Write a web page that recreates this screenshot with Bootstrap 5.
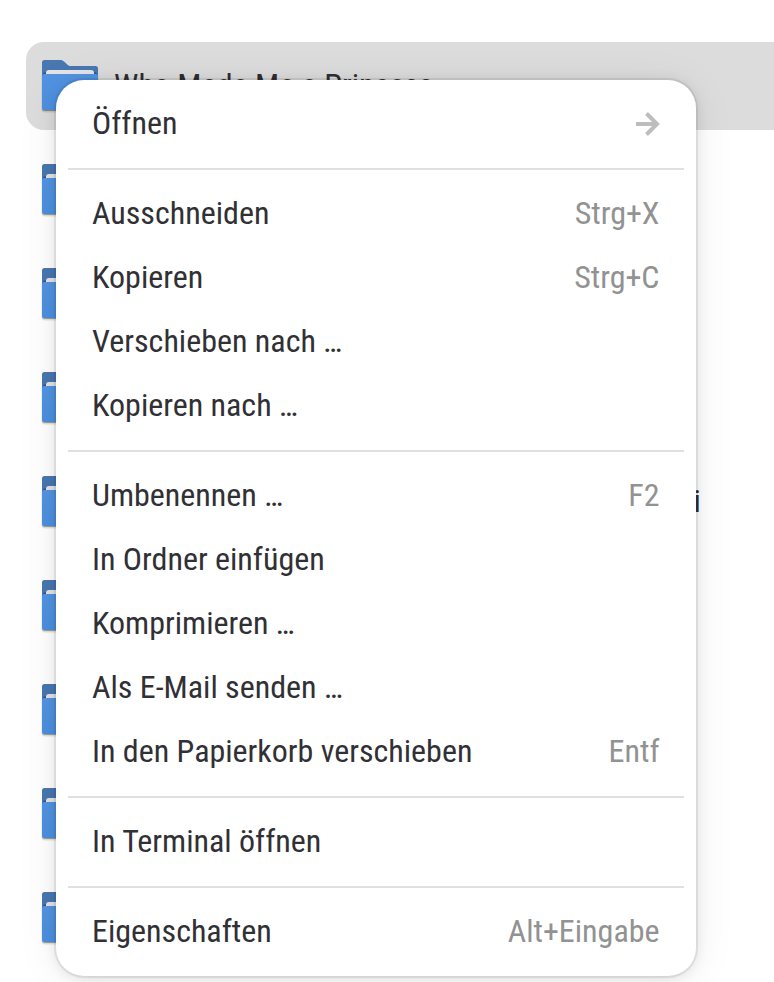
<!DOCTYPE html>
<html lang="de">
<head>
<meta charset="utf-8">
<meta name="viewport" content="width=device-width, initial-scale=1">
<title>Dateien</title>
<link href="https://cdn.jsdelivr.net/npm/bootstrap@5.3.0/dist/css/bootstrap.min.css" rel="stylesheet">
<style>
body { font-family: "Roboto Condensed", Roboto, sans-serif; font-size: 32px; line-height: 1; color: #2e2e33; height: 982px; }
.file-list { gap: 16px; padding: 42px 0 0 26px; }
.file-row { height: 88px; padding-left: 13px; flex: none; border-radius: 18px 0 0 18px; }
.file-row.selected { background: #dcdcdc; }
.folder { width: 62px; height: 64px; flex: none; }
.file-name { margin-left: 13px; line-height: 40px; padding-bottom: 2px; }
.file-name.tail { margin-left: 592.6px; }
.ctx { top: 80px; left: 56px; width: 640px; padding: 12px; border-radius: 28px; box-shadow: 0 0 0 2px rgba(0,0,0,.07), 0 2px 14px rgba(0,0,0,.10), 0 4px 44px rgba(0,0,0,.07); }
.ctx-item { height: 64px; padding: 0 24px; color: #303035; }
.ctx-item span { line-height: 40px; padding-bottom: 2px; }
.ctx-item .shortcut { color: #929292; padding-right: .5px; }
.ctx-line { height: 2px; margin: 12px 0; background: #e0e0e0; }
</style>
<script src="https://cdn.jsdelivr.net/npm/bootstrap@5.3.0/dist/js/bootstrap.bundle.min.js"></script>
</head>
<body class="bg-white overflow-hidden position-relative">
<svg width="0" height="0" class="position-absolute">
  <defs>
    <linearGradient id="front" x1="0" y1="0" x2="0" y2="1"><stop offset="0" stop-color="#5294e2"/><stop offset="1" stop-color="#4d8fdf"/></linearGradient>
  </defs>
  <symbol id="folder" viewBox="0 0 62 64">
    <path d="M2.500 54V20h57v34a3.500 3.500 0 0 1-3.500 3.500H6A3.500 3.500 0 0 1 2.500 54z" fill="#000" opacity=".12" transform="translate(0 1)"/>
    <path d="M3 54V20h56v34a3 3 0 0 1-3 3H6a3 3 0 0 1-3-3z" fill="#000" opacity=".3"/>
    <path d="M3 8.500A2.500 2.500 0 0 1 5.500 6H21c2 0 3 .6 4 1.600l3.500 3.200c1 .9 1.800 1.200 3 1.200h25a2.500 2.500 0 0 1 2.500 2.500V30H3z" fill="#4877b1"/>
    <path d="M3 23c0-3 1.500-5 4-5v5zM59 23c0-3-1.500-5-4-5v5z" fill="#305b93"/>
    <path d="M7 24v-5a3 3 0 0 1 3-3h42a3 3 0 0 1 3 3v5z" fill="#e4e4e6"/>
    <path d="M3 22a2 2 0 0 1 2-2h52a2 2 0 0 1 2 2v31.500a2.500 2.500 0 0 1-2.500 2.500h-51A2.500 2.500 0 0 1 3 53.500z" fill="url(#front)"/>
  </symbol>
</svg>

<main class="file-list d-flex flex-column">
  <div class="file-row selected d-flex align-items-center"><svg class="folder"><use href="#folder"/></svg><span class="file-name">Who Made Me a Princess</span></div>
  <div class="file-row d-flex align-items-center"><svg class="folder"><use href="#folder"/></svg></div>
  <div class="file-row d-flex align-items-center"><svg class="folder"><use href="#folder"/></svg></div>
  <div class="file-row d-flex align-items-center"><svg class="folder"><use href="#folder"/></svg></div>
  <div class="file-row d-flex align-items-center"><svg class="folder"><use href="#folder"/></svg><span class="file-name tail">i</span></div>
  <div class="file-row d-flex align-items-center"><svg class="folder"><use href="#folder"/></svg></div>
  <div class="file-row d-flex align-items-center"><svg class="folder"><use href="#folder"/></svg></div>
  <div class="file-row d-flex align-items-center"><svg class="folder"><use href="#folder"/></svg></div>
  <div class="file-row d-flex align-items-center"><svg class="folder"><use href="#folder"/></svg></div>
</main>

<nav class="ctx position-absolute bg-white">
  <a class="ctx-item d-flex align-items-center justify-content-between text-decoration-none"><span>Öffnen</span>
    <svg width="24" height="24" viewBox="0 0 24 24" fill="none" stroke="#bdbdbd" stroke-width="4"><path d="M0 12h21M10.500 1.500L21 12 10.500 22.500"/></svg></a>
  <div class="ctx-line"></div>
  <a class="ctx-item d-flex align-items-center justify-content-between text-decoration-none"><span>Ausschneiden</span><span class="shortcut">Strg+X</span></a>
  <a class="ctx-item d-flex align-items-center justify-content-between text-decoration-none"><span>Kopieren</span><span class="shortcut">Strg+C</span></a>
  <a class="ctx-item d-flex align-items-center text-decoration-none"><span>Verschieben nach …</span></a>
  <a class="ctx-item d-flex align-items-center text-decoration-none"><span>Kopieren nach …</span></a>
  <div class="ctx-line"></div>
  <a class="ctx-item d-flex align-items-center justify-content-between text-decoration-none"><span>Umbenennen …</span><span class="shortcut">F2</span></a>
  <a class="ctx-item d-flex align-items-center text-decoration-none"><span>In Ordner einfügen</span></a>
  <a class="ctx-item d-flex align-items-center text-decoration-none"><span>Komprimieren …</span></a>
  <a class="ctx-item d-flex align-items-center text-decoration-none"><span>Als E-Mail senden …</span></a>
  <a class="ctx-item d-flex align-items-center justify-content-between text-decoration-none"><span>In den Papierkorb verschieben</span><span class="shortcut">Entf</span></a>
  <div class="ctx-line"></div>
  <a class="ctx-item d-flex align-items-center text-decoration-none"><span>In Terminal öffnen</span></a>
  <div class="ctx-line"></div>
  <a class="ctx-item d-flex align-items-center justify-content-between text-decoration-none"><span>Eigenschaften</span><span class="shortcut">Alt+Eingabe</span></a>
</nav>
</body>
</html>
